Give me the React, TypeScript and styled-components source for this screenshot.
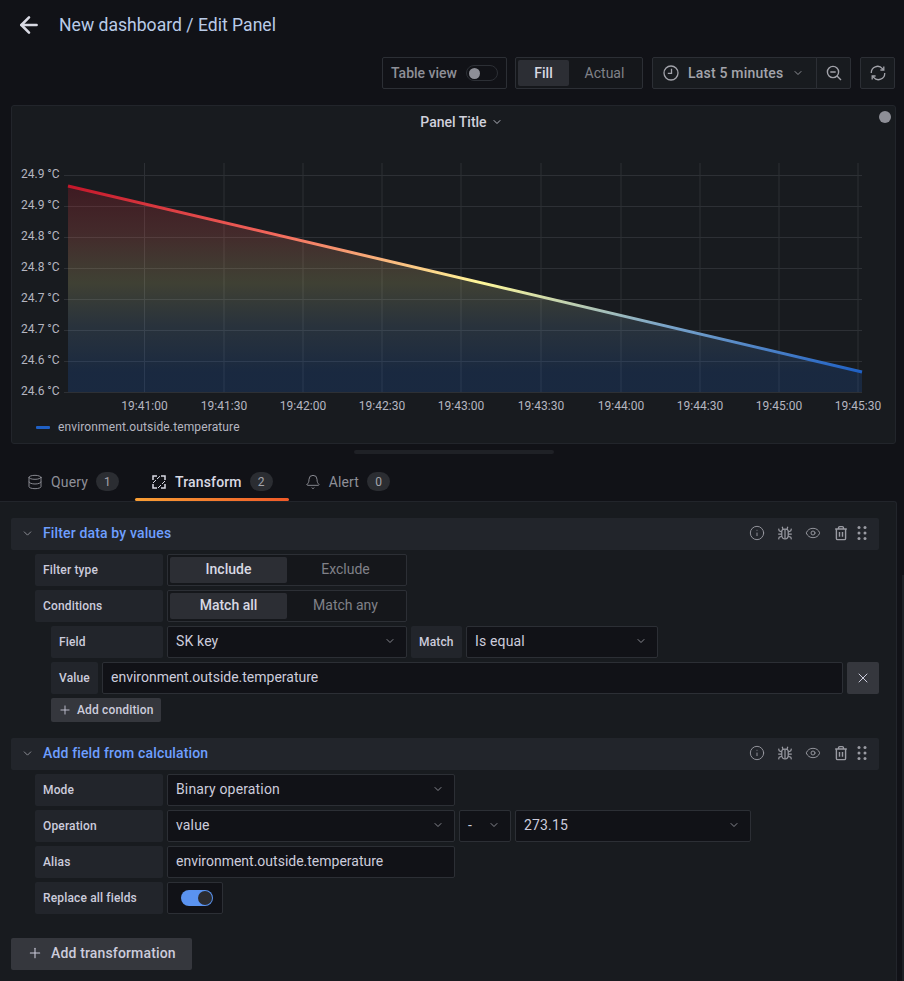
import { ArrowLeft, Bell, ChevronDown, Database, Eye, Info, Plus, X } from "lucide-react";
import styled, { createGlobalStyle } from "styled-components";

const GlobalStyle = createGlobalStyle`
  html, body { margin: 0; height: 100%; background: #111217; overflow: hidden; }
  body { font-family: Roboto, "Liberation Sans", sans-serif; color: #ccccdc; }
  * { box-sizing: border-box; }
`;

const Page = styled.div`
  width: 904px;
  height: 981px;
  display: flex;
  flex-direction: column;
  position: relative;
`;

// top bar
const Header = styled.header`
  height: 50px;
  padding-left: 16px;
  display: flex;
  align-items: center;
  gap: 17px;
  color: #d8d9e3;
`;
const PageTitle = styled.h1`
  margin: 0;
  font-size: 17.6px;
  font-weight: 400;
  color: #b9cbe8;
`;
const Toolbar = styled.div`
  margin-top: 7px;
  padding-right: 9px;
  height: 32px;
  display: flex;
  justify-content: flex-end;
`;
const ToolBox = styled.div<{ $gap?: number; $width?: number }>`
  height: 32px;
  width: ${(p) => (p.$width ? p.$width + "px" : "auto")};
  margin-left: ${(p) => p.$gap ?? 0}px;
  display: flex;
  align-items: center;
  border: 1px solid #2c2f35;
  border-radius: 2px;
  font-size: 14px;
  font-weight: 500;
  color: #8e8f97;
`;
const TableView = styled(ToolBox)`
  padding-left: 8px;
  gap: 9px;
`;
const TimeButton = styled(ToolBox)`
  background: #181b1f;
  border-radius: 2px 0 0 2px;
  padding: 0 9px 0 10px;
  gap: 9px;
  letter-spacing: 0.2px;
  color: #a3a4ab;
`;
const IconButton = styled(ToolBox)`
  background: #181b1f;
  justify-content: center;
  color: #a3a4ab;
`;
const ZoomButton = styled(IconButton)`
  margin-left: -1px;
  border-radius: 0 2px 2px 0;
`;
const OffToggle = styled.span`
  width: 32px;
  height: 16px;
  border: 1px solid #2c2f35;
  border-radius: 8px;
  position: relative;
  &::after {
    content: "";
    position: absolute;
    left: 2px;
    top: 1.5px;
    width: 11px;
    height: 11px;
    border-radius: 50%;
    background: #8e8f97;
  }
`;
const RadioGroup = styled.div<{ $width: number; $gap?: number }>`
  width: ${(p) => p.$width}px;
  height: 32px;
  margin-left: ${(p) => p.$gap ?? 0}px;
  padding: 2px;
  display: flex;
  background: #15171b;
  border: 1px solid #2c2f35;
  border-radius: 2px;
`;
const RadioButton = styled.div<{ $active?: boolean; $width: number }>`
  width: ${(p) => p.$width}px;
  padding-bottom: 2px;
  display: flex;
  align-items: center;
  justify-content: center;
  border-radius: 2px;
  font-size: 14px;
  font-weight: ${(p) => (p.$active ? 500 : 400)};
  color: ${(p) => (p.$active ? "#d8d9e3" : "#808188")};
  background: ${(p) => (p.$active ? "#2c2e34" : "transparent")};
`;
const ViewModeButton = styled(RadioButton)`
  padding-bottom: 0;
`;

// panel
const Panel = styled.section`
  position: relative;
  margin: 16px 8px 0 11px;
  height: 339px;
  background: #181b1f;
  border: 1px solid #22252b;
  border-radius: 3px;
`;
const PanelTitle = styled.div`
  height: 32px;
  padding-left: 16px;
  display: flex;
  align-items: center;
  justify-content: center;
  gap: 4px;
  font-size: 14px;
  font-weight: 500;
  color: #d0d1dc;
`;
const StatusDot = styled.span`
  position: absolute;
  right: 4px;
  top: 5px;
  width: 12px;
  height: 12px;
  border-radius: 50%;
  background: #8e8f97;
`;
const ChartSvg = styled.svg`
  display: block;
  margin-top: 20px;
`;
const AxisText = styled.text`
  font-size: 12px;
  fill: #b5b6c0;
  font-family: Roboto, "Liberation Sans", sans-serif;
`;
const Legend = styled.div`
  display: flex;
  align-items: center;
  gap: 8px;
  padding-left: 24px;
  font-size: 12px;
  letter-spacing: 0.13px;
  color: #b5b6c0;
`;
const LegendSwatch = styled.span`
  width: 14px;
  height: 3px;
  border-radius: 1px;
  background: #1f60c4;
`;
const ResizeRow = styled.div`
  height: 18px;
  display: flex;
  justify-content: center;
  padding: 6px 0 0 4px;
`;
const ResizeBar = styled.span`
  width: 200px;
  height: 4px;
  border-radius: 2px;
  background: #1f2126;
`;

// tabs
const Tabs = styled.nav`
  height: 39px;
  padding-left: 11px;
  display: flex;
  align-items: stretch;
`;
const Tab = styled.div<{ $active?: boolean }>`
  position: relative;
  padding: 0 16px;
  display: flex;
  align-items: center;
  font-size: 14px;
  letter-spacing: 0.15px;
  font-weight: ${(p) => (p.$active ? 500 : 400)};
  color: ${(p) => (p.$active ? "#d8d9e3" : "#8e8f97")};
  &::after {
    content: "";
    display: ${(p) => (p.$active ? "block" : "none")};
    position: absolute;
    left: 0;
    right: 0;
    bottom: 0;
    height: 3px;
    border-radius: 2px;
    background: linear-gradient(90deg, #f99f35, #f05a28);
  }
`;
const TabLabel = styled.span`
  margin: 0 8px;
`;
const Badge = styled.span`
  width: 23px;
  height: 19px;
  border-radius: 10px;
  display: flex;
  align-items: center;
  justify-content: center;
  font-size: 12px;
  font-weight: 400;
  background: #2b2d32;
  color: #a3a4ab;
`;

// editor
const Editor = styled.main`
  flex: 1;
  width: 897px;
  padding: 16px 17px 0 11px;
  background: #181b1f;
  border-top: 1px solid #22252b;
  border-right: 1px solid #22252b;
  border-top-right-radius: 3px;
  display: flex;
  flex-direction: column;
`;
const Transformation = styled.div`
  display: flex;
  flex-direction: column;
  gap: 4px;
  margin-bottom: 16px;
`;
const SectionHeader = styled.div`
  height: 32px;
  padding: 0 12px 2px 10px;
  background: #22252b;
  border-radius: 2px;
  display: flex;
  align-items: center;
  color: #9a9ba3;
`;
const SectionTitle = styled.span`
  margin-left: 9px;
  flex: 1;
  font-size: 14px;
  font-weight: 500;
  letter-spacing: 0.15px;
  color: #6e9fff;
`;
const HeaderIcons = styled.div`
  display: flex;
  align-items: center;
  gap: 12px;
`;
const DragHandle = styled.span`
  display: flex;
  margin-left: -4px;
`;
const Row = styled.div<{ $indent?: number }>`
  height: 32px;
  padding-left: ${(p) => p.$indent ?? 24}px;
  display: flex;
  gap: 4px;
`;
const Label = styled.label<{ $width: number }>`
  width: ${(p) => p.$width}px;
  padding-left: 8px;
  display: flex;
  align-items: center;
  flex-shrink: 0;
  background: #22252b;
  border-radius: 2px;
  font-size: 12px;
  font-weight: 500;
  letter-spacing: 0.15px;
  color: #ccccdc;
`;
const Field = styled.div<{ $width: number }>`
  width: ${(p) => p.$width}px;
  padding: 0 8px 2px;
  display: flex;
  align-items: center;
  justify-content: space-between;
  background: #111217;
  border: 1px solid #2c2f35;
  border-radius: 2px;
  font-size: 14px;
  color: #ccccdc;
`;
const Select = styled(Field)`
  padding-right: 10px;
  letter-spacing: 0.15px;
  svg { color: #9a9ba3; }
`;
const RemoveButton = styled.button`
  width: 32px;
  height: 32px;
  padding: 0;
  border: 0;
  border-radius: 2px;
  display: flex;
  align-items: center;
  justify-content: center;
  background: #35373d;
  color: #ccccdc;
`;
const Button = styled.button<{ $small?: boolean }>`
  align-self: flex-start;
  height: ${(p) => (p.$small ? 24 : 32)}px;
  padding: ${(p) => (p.$small ? "0 7px 1px 7px" : "0 16px 2px 16px")};
  margin-left: ${(p) => (p.$small ? 40 : 0)}px;
  border: 0;
  border-radius: 2px;
  display: flex;
  align-items: center;
  gap: ${(p) => (p.$small ? 5 : 8)}px;
  background: #35373d;
  color: #ccccdc;
  font-family: inherit;
  font-size: ${(p) => (p.$small ? 12 : 14)}px;
  font-weight: 500;
  letter-spacing: 0.15px;
`;
const SwitchBox = styled(Field)`
  justify-content: flex-end;
  padding: 0 9px 0 0;
`;
const OnToggle = styled.span`
  width: 32px;
  height: 16px;
  border-radius: 8px;
  background: #5a93f0;
  position: relative;
  &::after {
    content: "";
    position: absolute;
    right: 1px;
    top: 1px;
    width: 14px;
    height: 14px;
    border-radius: 50%;
    background: #2b2c30;
  }
`;
const AddWrap = styled.div`
  margin-top: 8px;
`;
const ScrollThumb = styled.span`
  position: absolute;
  right: 0;
  top: 575px;
  width: 2px;
  height: 406px;
  background: #1d2025;
`;

const TransformIcon = () => (
  <svg width="16" height="16" viewBox="0 0 16 16" fill="none" stroke="currentColor" strokeWidth="1.5">
    <path d="M2 6V2h4M10 2h4v4M14 10v4h-4M6 14H2v-4" />
    <path d="M9 2.2 6 5M14 7l-3 3M7 14l3-3M2 9l3-3" strokeWidth="1" />
  </svg>
);

const ClockIcon = () => (
  <svg width="16" height="16" viewBox="0 0 16 16" fill="none" stroke="currentColor" strokeWidth="1.3">
    <circle cx="8" cy="8" r="7" />
    <path d="M8.5 3.8v4.6H4.8" />
  </svg>
);

const ZoomOutIcon = () => (
  <svg width="16" height="16" viewBox="0 0 16 16" fill="none" stroke="currentColor" strokeWidth="1.4">
    <circle cx="7" cy="7" r="5.6" />
    <path d="M4.3 7h5.4M11 11l4 4" />
  </svg>
);

const BugIcon = () => (
  <svg width="16" height="16" viewBox="0 0 16 16" fill="none" stroke="currentColor" strokeWidth="1.2">
    <path d="M4.8 6c0-1 1.2-1.9 3.2-1.9s3.2.9 3.2 1.9v4.6c0 2-1.4 3.4-3.2 3.4s-3.2-1.4-3.2-3.4z" />
    <path d="M8 4.5V14M6 4.3 5.2 1.8M10 4.3l.8-2.5M4.8 7 2.2 5.8 1.6 3.6M11.2 7l2.6-1.2.6-2.2M4.8 9.2H1.2M11.2 9.2h3.6M4.9 11.2l-2.7 1-.6 2.2M11.1 11.2l2.7 1 .6 2.2" />
  </svg>
);

const TrashIcon = () => (
  <svg width="16" height="16" viewBox="0 0 16 16" fill="none" stroke="currentColor" strokeWidth="1.4">
    <path d="M2.2 4h11.6M5.6 4V2.6c0-.6.4-1 1-1h2.8c.6 0 1 .4 1 1V4" />
    <path d="M3.4 4v9.4c0 .7.5 1.2 1.2 1.2h6.8c.7 0 1.2-.5 1.2-1.2V4M6.5 7v4.8M9.5 7v4.8" />
  </svg>
);

const DragIcon = () => (
  <svg width="10" height="16" viewBox="0 0 10 16" fill="currentColor">
    {[2.5, 8, 13.5].map((y) => (
      <g key={y}>
        <circle cx="2" cy={y} r="1.5" />
        <circle cx="8" cy={y} r="1.5" />
      </g>
    ))}
  </svg>
);

const RefreshIcon = () => (
  <svg width="16" height="16" viewBox="0 0 16 16" fill="none" stroke="currentColor" strokeWidth="1.3">
    <path d="M1.3 8A6.3 6.3 0 0 1 12.4 3.6l1 1.2M14.7 8A6.3 6.3 0 0 1 3.6 12.4l-1-1.2" />
    <path d="M13.8 1.6v3.4h-3.4M2.2 14.4V11h3.4" />
  </svg>
);

const Chevron = () => <ChevronDown size={12} strokeWidth={1.7} />;

const hLines = [175, 206, 237, 268, 299, 330, 361, 392];
const vLines = [144.5, 224, 303, 382, 461, 541, 621, 700, 779, 858];
const yLabels = ["24.9 °C", "24.9 °C", "24.8 °C", "24.8 °C", "24.7 °C", "24.7 °C", "24.6 °C", "24.6 °C"];
const xLabels = ["19:41:00", "19:41:30", "19:42:00", "19:42:30", "19:43:00", "19:43:30", "19:44:00", "19:44:30", "19:45:00", "19:45:30"];

function Chart() {
  return (
    <ChartSvg width="883" height="262" viewBox="12 158 883 262">
      <defs>
        <linearGradient id="lineGrad" gradientUnits="userSpaceOnUse" x1="0" y1="186" x2="0" y2="372">
          <stop offset="0" stopColor="#c4162a" />
          <stop offset="0.25" stopColor="#f2645a" />
          <stop offset="0.52" stopColor="#fff899" />
          <stop offset="0.75" stopColor="#7ba5c9" />
          <stop offset="1" stopColor="#1f60c4" />
        </linearGradient>
        <linearGradient id="fillGrad" gradientUnits="userSpaceOnUse" x1="0" y1="186" x2="0" y2="372">
          <stop offset="0" stopColor="#c4162a" stopOpacity="0.22" />
          <stop offset="0.25" stopColor="#f2645a" stopOpacity="0.2" />
          <stop offset="0.52" stopColor="#fff899" stopOpacity="0.17" />
          <stop offset="0.75" stopColor="#7ba5c9" stopOpacity="0.17" />
          <stop offset="1" stopColor="#1f60c4" stopOpacity="0.2" />
        </linearGradient>
      </defs>
      {hLines.map((y) => (
        <line key={y} x1="64" x2="862" y1={y + 0.5} y2={y + 0.5} stroke="#2d3035" />
      ))}
      {vLines.map((x) => (
        <line key={x} x1={x} x2={x} y1="163" y2="392" stroke="#2d3035" />
      ))}
      <polygon points="68,186 862,372 862,392 68,392" fill="url(#fillGrad)" />
      <line x1="68" y1="186" x2="862" y2="372" stroke="url(#lineGrad)" strokeWidth="3" />
      {yLabels.map((t, i) => (
        <AxisText key={i} x="21" y={hLines[i] + 3}>
          {t}
        </AxisText>
      ))}
      {xLabels.map((t, i) => (
        <AxisText key={t} x={vLines[i]} y="410" textAnchor="middle">
          {t}
        </AxisText>
      ))}
    </ChartSvg>
  );
}

function TransformHeader({ title }: { title: string }) {
  return (
    <SectionHeader>
      <ChevronDown size={13} strokeWidth={1.6} />
      <SectionTitle>{title}</SectionTitle>
      <HeaderIcons>
        <Info size={16} strokeWidth={1.4} />
        <BugIcon />
        <Eye size={16} strokeWidth={1.4} />
        <TrashIcon />
        <DragHandle>
          <DragIcon />
        </DragHandle>
      </HeaderIcons>
    </SectionHeader>
  );
}

export default function App() {
  return (
    <Page>
      <GlobalStyle />
      <Header>
        <ArrowLeft size={26} strokeWidth={2.4} />
        <PageTitle>New dashboard / Edit Panel</PageTitle>
      </Header>

      <Toolbar>
        <TableView $width={125}>
          Table view
          <OffToggle />
        </TableView>
        <RadioGroup $width={128} $gap={8}>
          <ViewModeButton $active $width={51}>Fill</ViewModeButton>
          <ViewModeButton $width={71}>Actual</ViewModeButton>
        </RadioGroup>
        <TimeButton $gap={9} $width={165}>
          <ClockIcon />
          Last 5 minutes
          <Chevron />
        </TimeButton>
        <ZoomButton $width={35}>
          <ZoomOutIcon />
        </ZoomButton>
        <IconButton $gap={9} $width={35}>
          <RefreshIcon />
        </IconButton>
      </Toolbar>

      <Panel>
        <PanelTitle>
          Panel Title <Chevron />
        </PanelTitle>
        <StatusDot />
        <Chart />
        <Legend>
          <LegendSwatch />
          environment.outside.temperature
        </Legend>
      </Panel>
      <ResizeRow>
        <ResizeBar />
      </ResizeRow>

      <Tabs>
        <Tab>
          <Database size={16} strokeWidth={1.4} />
          <TabLabel>Query</TabLabel>
          <Badge>1</Badge>
        </Tab>
        <Tab $active>
          <TransformIcon />
          <TabLabel>Transform</TabLabel>
          <Badge>2</Badge>
        </Tab>
        <Tab>
          <Bell size={16} strokeWidth={1.4} />
          <TabLabel>Alert</TabLabel>
          <Badge>0</Badge>
        </Tab>
      </Tabs>

      <Editor>
        <Transformation>
          <TransformHeader title="Filter data by values" />
          <Row>
            <Label $width={128}>Filter type</Label>
            <RadioGroup $width={240}>
              <RadioButton $active $width={117}>Include</RadioButton>
              <RadioButton $width={117}>Exclude</RadioButton>
            </RadioGroup>
          </Row>
          <Row>
            <Label $width={128}>Conditions</Label>
            <RadioGroup $width={240}>
              <RadioButton $active $width={117}>Match all</RadioButton>
              <RadioButton $width={117}>Match any</RadioButton>
            </RadioGroup>
          </Row>
          <Row $indent={40}>
            <Label $width={112}>Field</Label>
            <Select $width={240}>
              SK key
              <Chevron />
            </Select>
            <Label $width={51}>Match</Label>
            <Select $width={192}>
              Is equal
              <Chevron />
            </Select>
          </Row>
          <Row $indent={40}>
            <Label $width={47}>Value</Label>
            <Field $width={741}>environment.outside.temperature</Field>
            <RemoveButton>
              <X size={16} strokeWidth={1.5} />
            </RemoveButton>
          </Row>
          <Button $small>
            <Plus size={14} strokeWidth={1.5} />
            Add condition
          </Button>
        </Transformation>

        <Transformation>
          <TransformHeader title="Add field from calculation" />
          <Row>
            <Label $width={128}>Mode</Label>
            <Select $width={288}>
              Binary operation
              <Chevron />
            </Select>
          </Row>
          <Row>
            <Label $width={128}>Operation</Label>
            <Select $width={288}>
              value
              <Chevron />
            </Select>
            <Select $width={52}>
              -
              <Chevron />
            </Select>
            <Select $width={236}>
              273.15
              <Chevron />
            </Select>
          </Row>
          <Row>
            <Label $width={128}>Alias</Label>
            <Field $width={288}>environment.outside.temperature</Field>
          </Row>
          <Row>
            <Label $width={128}>Replace all fields</Label>
            <SwitchBox $width={56}>
              <OnToggle />
            </SwitchBox>
          </Row>
        </Transformation>

        <AddWrap>
          <Button>
            <Plus size={16} strokeWidth={1.6} />
            Add transformation
          </Button>
        </AddWrap>
      </Editor>
      <ScrollThumb />
    </Page>
  );
}
